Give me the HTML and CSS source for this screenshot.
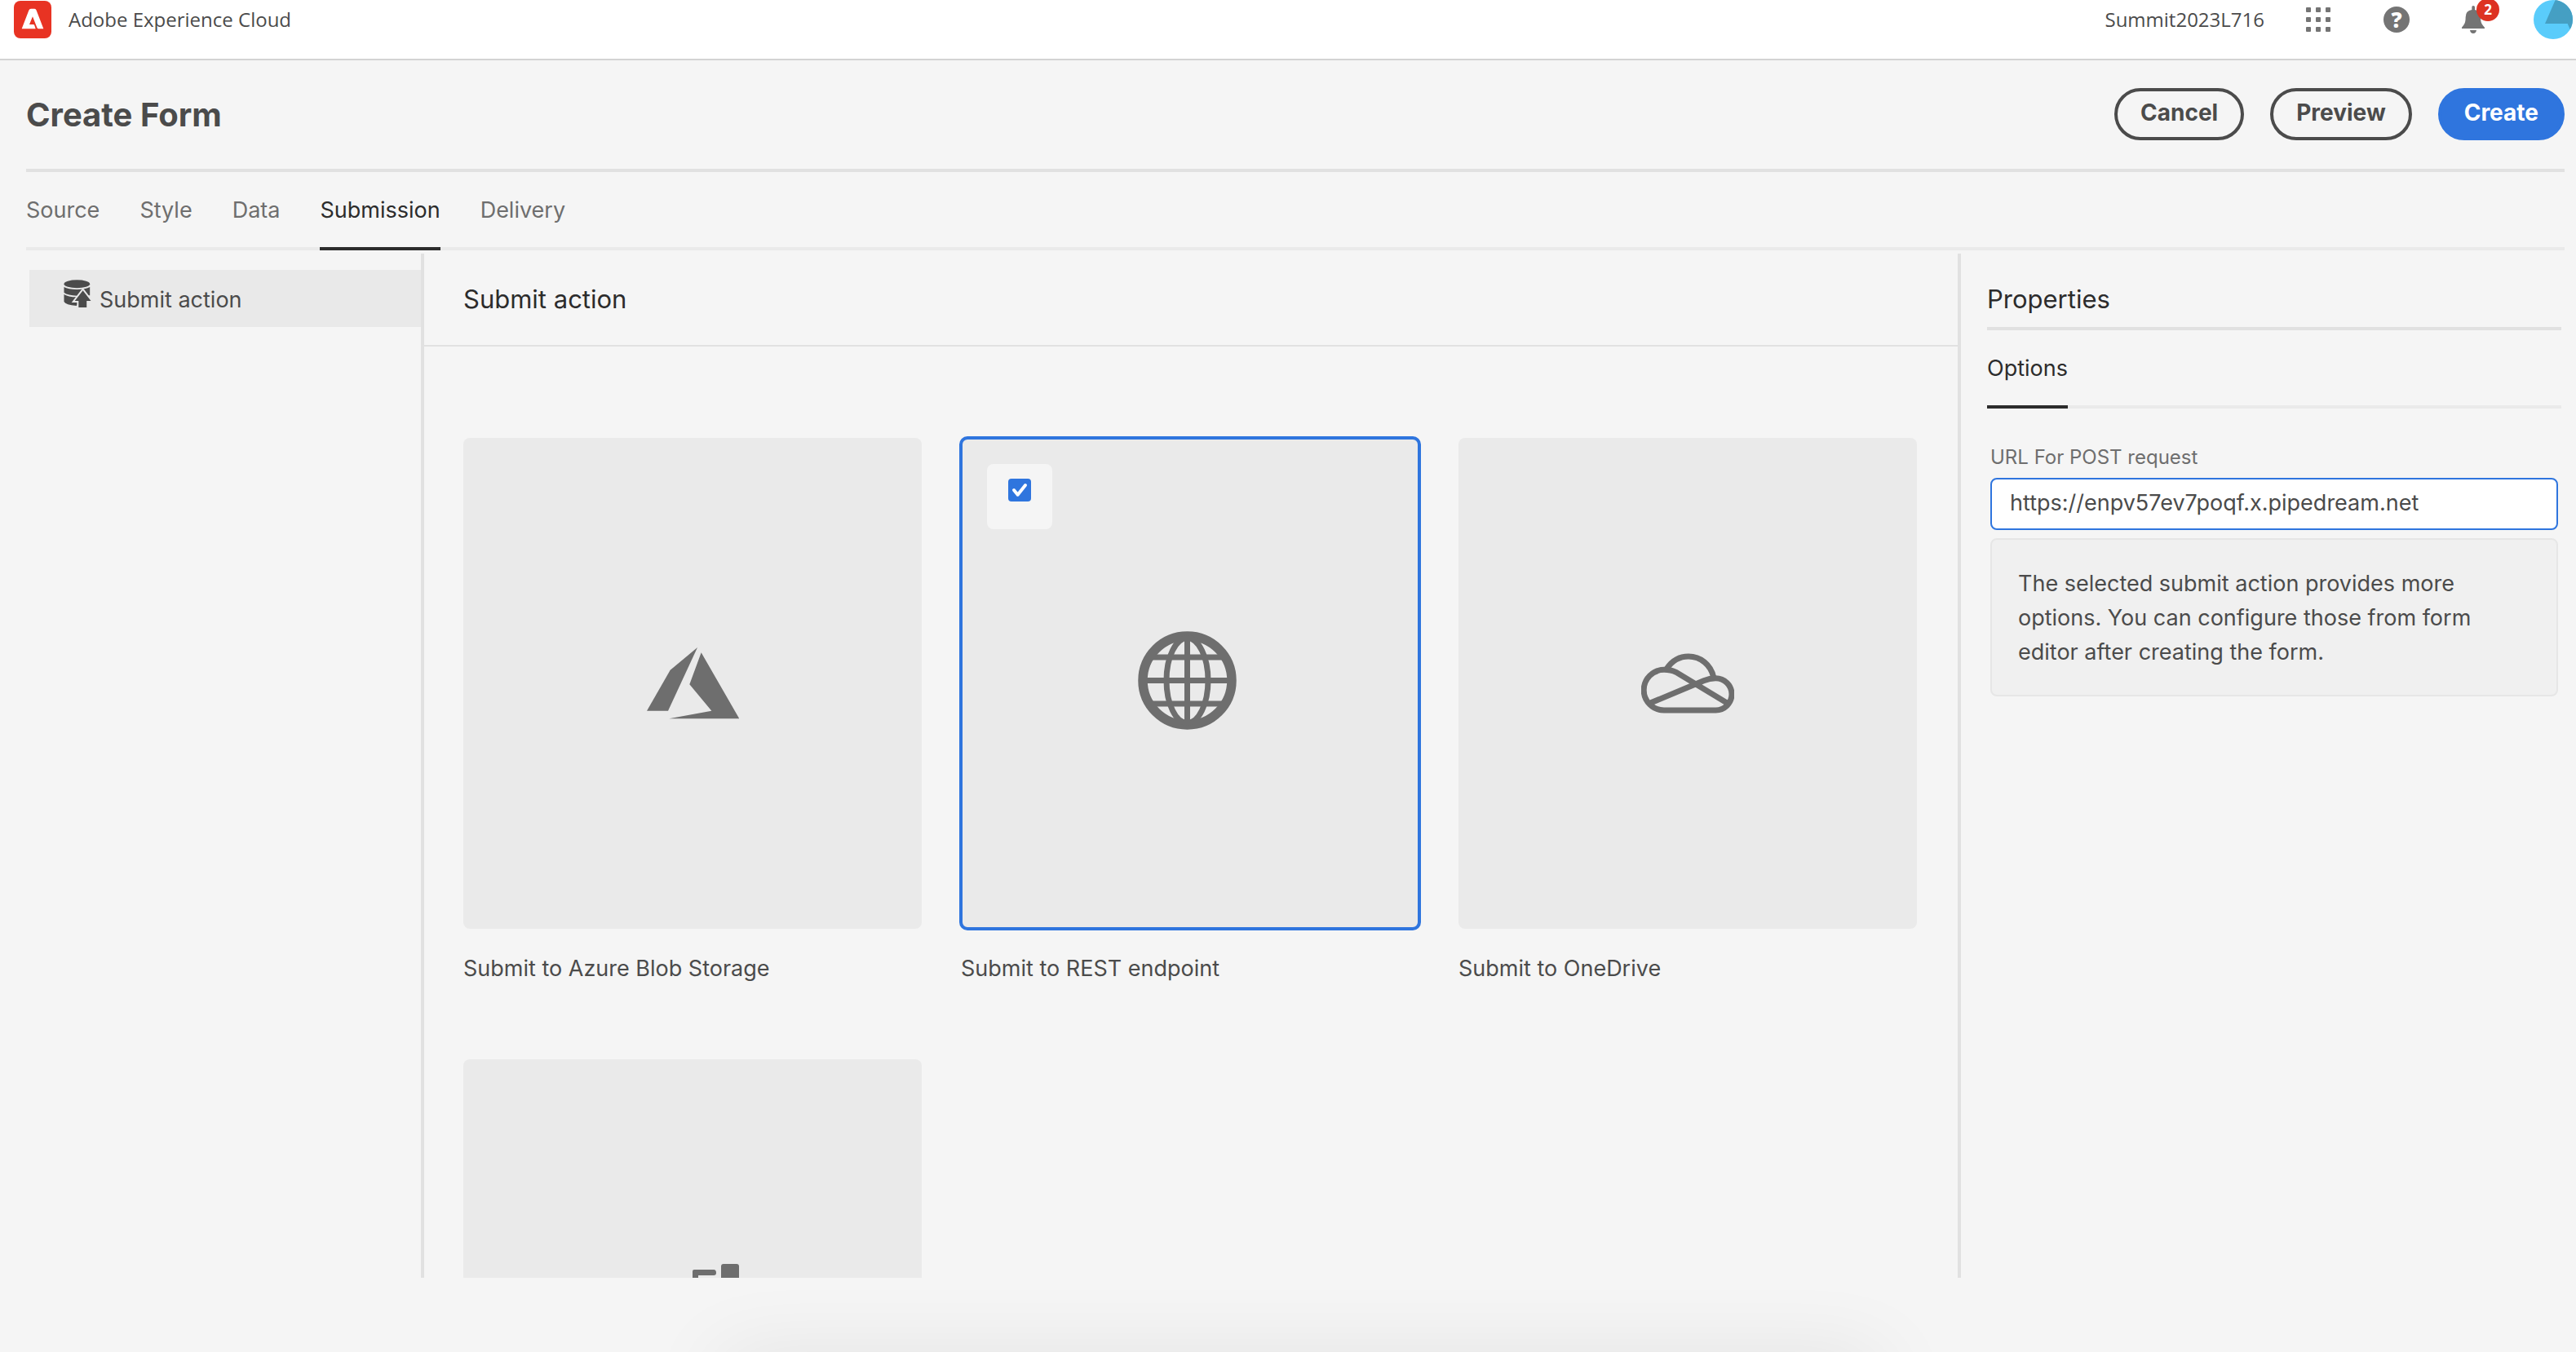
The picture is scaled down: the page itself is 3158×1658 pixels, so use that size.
FILE: index.html
```html
<!DOCTYPE html>
<html lang="en">
<head>
<meta charset="utf-8">
<meta name="viewport" content="width=device-width, initial-scale=1">
<title>Create Form - Adobe Experience Cloud</title>
<link rel="stylesheet" href="styles.css">
</head>
<body>
<header class="shell">
  <a class="brand" href="#">
    <svg class="brand-logo" viewBox="0 0 138 138" aria-hidden="true">
      <rect width="138" height="138" rx="24" fill="#e83323"/>
      <path d="M29 103 55 35Q57 29 63 29H76Q81 29 83 35L109 103H91Q87 103 85 98L69 58 57 87H71Q75 87 76 91L80 103Z" fill="#fff"/>
    </svg>
    <span>Adobe Experience Cloud</span>
  </a>
  <div class="shell-end">
    <button class="org" type="button">Summit2023L716</button>
    <div class="shell-actions">
      <button class="shell-button" type="button" aria-label="Solutions">
        <svg width="30" height="30" viewBox="0 0 30 30" fill="#747474">
          <rect width="6" height="6" rx="1"/><rect x="12" width="6" height="6" rx="1"/><rect x="24" width="6" height="6" rx="1"/>
          <rect y="12" width="6" height="6" rx="1"/><rect x="12" y="12" width="6" height="6" rx="1"/><rect x="24" y="12" width="6" height="6" rx="1"/>
          <rect y="24" width="6" height="6" rx="1"/><rect x="12" y="24" width="6" height="6" rx="1"/><rect x="24" y="24" width="6" height="6" rx="1"/>
        </svg>
      </button>
      <button class="shell-button" type="button" aria-label="Help"><span class="help">?</span></button>
      <button class="shell-button" type="button" aria-label="Notifications">
        <svg width="32" height="36" viewBox="0 0 96 108" fill="#747474">
          <path d="M37 8Q37 3 42 3Q48 3 48 8V18Q69 21 69 45C69 66 74 71 84 83V87H0V83C10 71 14 66 14 45Q14 21 37 18Z"/>
          <path d="M30 93H54Q52 105 42 105Q32 105 30 93Z"/>
        </svg>
        <span class="badge">2</span>
      </button>
      <button class="shell-button" type="button" aria-label="Account">
        <svg width="48" height="48" viewBox="0 0 144 144">
          <circle cx="72" cy="72" r="72" fill="#5accfb"/>
          <path d="M80 0 42 87H125L134 108A72 72 0 0 0 80 0Z" fill="#459fc3"/>
        </svg>
      </button>
    </div>
  </div>
</header>

<main class="page">
  <div class="titlebar">
    <h1 class="title">Create Form</h1>
    <div class="actions">
      <button class="button" type="button">Cancel</button>
      <button class="button" type="button">Preview</button>
      <button class="button button-primary" type="button">Create</button>
    </div>
  </div>

  <nav class="tabs" aria-label="Steps">
    <a class="tab" href="#">Source</a>
    <a class="tab" href="#">Style</a>
    <a class="tab" href="#">Data</a>
    <a class="tab tab-active" href="#" aria-current="page">Submission</a>
    <a class="tab" href="#">Delivery</a>
  </nav>

  <div class="workspace">
    <aside class="side">
      <a class="side-item" href="#">
        <svg width="34" height="34" viewBox="53 68 102 103" aria-hidden="true">
          <ellipse cx="102" cy="84" rx="48" ry="15" fill="#4b4b4b"/>
          <path d="M54 95Q70 104 102 104Q134 104 150 95V126H134L100 165Q60 162 54 150Z" fill="#4b4b4b"/>
          <path d="M52 118Q68 130 102 130" fill="none" stroke="#e9e9e9" stroke-width="5"/>
          <path d="M124 108 154 147H138V180H108V147H94Z" fill="#4b4b4b" stroke="#e9e9e9" stroke-width="12"/>
          <path d="M124 108 154 147H138V171H108V147H94Z" fill="#4b4b4b"/>
        </svg>
        <span>Submit action</span>
      </a>
    </aside>

    <section class="center">
      <header class="center-head"><h2 class="heading">Submit action</h2></header>
      <div class="cards">
        <article class="card">
          <div class="thumb">
            <svg width="113" height="88" viewBox="0 0 339 264" fill="#6e6e6e" aria-hidden="true">
              <path d="M186 0 86 83 0 233H78Z"/>
              <path d="M200 19 340 262H82L238 233 157 136Z"/>
            </svg>
          </div>
          <h3 class="card-name">Submit to Azure Blob Storage</h3>
        </article>
        <article class="card">
          <div class="thumb thumb-selected">
            <label class="check"><input class="check-box" type="checkbox" checked aria-label="Submit to REST endpoint"></label>
            <svg width="128" height="128" viewBox="0 0 256 256" fill="none" stroke="#6e6e6e" stroke-width="14" aria-hidden="true">
              <circle cx="121" cy="121" r="109" stroke-width="23"/>
              <ellipse cx="121" cy="121" rx="51" ry="104"/>
              <path d="M121 12V230M12 121H230M30 64H212M30 178H212"/>
            </svg>
          </div>
          <h3 class="card-name">Submit to REST endpoint</h3>
        </article>
        <article class="card">
          <div class="thumb">
            <svg width="114" height="74" viewBox="96 91 342 220" fill="none" stroke="#6e6e6e" stroke-width="21" aria-hidden="true">
              <path d="M190 147C210 117 240 102 270 102C314 102 352 132 362 178"/>
              <path d="M410 272 224 160C210 153 196 151 180 151A74 74 0 0 0 180 300H370A59 59 0 0 0 370 182C352 182 338 186 326 191L128 274"/>
            </svg>
          </div>
          <h3 class="card-name">Submit to OneDrive</h3>
        </article>
        <article class="card">
          <div class="thumb">
            <svg width="114" height="100" viewBox="0 0 114 100" fill="#6e6e6e" aria-hidden="true">
              <rect x="92" y="0" width="22" height="22" rx="3"/>
              <path d="M57 9Q57 7 59 7H83Q86 7 86 11Q86 14 83 14H64V86H83Q86 86 86 90Q86 93 83 93H57V54H30V47H57Z"/>
              <rect x="0" y="34" width="34" height="34" rx="3"/>
              <rect x="92" y="78" width="22" height="22" rx="3"/>
            </svg>
          </div>
        </article>
      </div>
    </section>

    <aside class="props">
      <h2 class="heading props-head">Properties</h2>
      <nav class="tabs" aria-label="Properties"><a class="tab tab-active" href="#">Options</a></nav>
      <div class="fields">
        <label class="field-label" for="post-url">URL For POST request</label>
        <input class="field-input" id="post-url" type="text" value="https://enpv57ev7poqf.x.pipedream.net">
        <p class="note">The selected submit action provides more options. You can configure those from form editor after creating the form.</p>
      </div>
    </aside>
  </div>
</main>
</body>
</html>
```
FILE: styles.css
```css
* { box-sizing: border-box; }

body {
  margin: 0;
  height: 100vh;
  display: flex;
  flex-direction: column;
  overflow: hidden;
  background: #f5f5f5;
  color: #4b4b4b;
  font: 27px/40px Inter, "Liberation Sans", sans-serif;
}

h1, h2, h3, p { margin: 0; font-size: inherit; font-weight: 400; }
a { color: inherit; text-decoration: none; }
button { padding: 0; border: 0; background: none; color: inherit; font: inherit; cursor: pointer; }
svg { display: block; flex: none; }

/* Product header */
.shell {
  display: flex;
  justify-content: space-between;
  flex: none;
  padding: 0 4px 24px 17px;
  border-bottom: 2px solid #d3d3d3;
  background: #fff;
  font: 24px/48px "Open Sans", "Noto Sans", sans-serif;
}
.brand { display: flex; align-items: center; gap: 21px; }
.brand-logo { width: 46px; height: 46px; }
.shell-end { display: flex; gap: 42px; }
.shell-actions { display: flex; gap: 48px; }
.shell-button {
  position: relative;
  display: flex;
  align-items: center;
  justify-content: center;
  width: 48px;
  height: 48px;
}
.help {
  width: 32px;
  height: 32px;
  border-radius: 50%;
  background: #747474;
  color: #fff;
  font-size: 26px;
  font-weight: 800;
  line-height: 32px;
}
.badge {
  position: absolute;
  top: -2px;
  right: -6px;
  width: 28px;
  height: 28px;
  border-radius: 50%;
  background: #dd3222;
  color: #fff;
  font-size: 17px;
  font-weight: 700;
  line-height: 28px;
}

/* Page title and actions */
.page {
  display: flex;
  flex: 1;
  flex-direction: column;
  min-height: 0;
  padding: 0 14px 91px 32px;
}
.titlebar {
  display: flex;
  align-items: center;
  justify-content: space-between;
  padding: 34px 0 35px;
  border-bottom: 4px solid #e1e1e1;
}
.title { padding-top: 2px; font-size: 40px; font-weight: 700; line-height: 48px; }
.actions { display: flex; gap: 32px; }
.button {
  height: 64px;
  padding: 0 28px 4px;
  border: 4px solid #4b4b4b;
  border-radius: 32px;
  font-size: 28px;
  font-weight: 700;
}
.button-primary { border-color: #2f75de; background: #2f75de; color: #fff; }

/* Tabs */
.tabs { display: flex; gap: 49px; box-shadow: inset 0 -4px #eaeaea; }
.tab {
  padding: 27px 0 25px;
  border-bottom: 4px solid transparent;
  color: #6e6e6e;
}
.tab-active { border-color: #2c2c2c; color: #2c2c2c; }

/* Three panes */
.workspace {
  display: grid;
  grid-template-columns: 488px minmax(0, 1fr) 744px;
  flex: 1;
  min-height: 0;
  padding-top: 4px;
}
.heading { color: #2c2c2c; font-size: 31px; line-height: 44px; }

.side { padding: 20px 0 0 4px; border-right: 4px solid #e1e1e1; }
.side-item {
  display: flex;
  align-items: baseline;
  gap: 10px;
  min-height: 70px;
  padding: 12px 42px 0;
  background: #e9e9e9;
}

.center { display: flex; flex-direction: column; min-height: 0; }
.center-head { padding: 34px 48px; border-bottom: 2px solid #e1e1e1; }
.cards {
  display: grid;
  grid-template-columns: repeat(3, minmax(0, 1fr));
  align-content: start;
  flex: 1;
  gap: 91px 48px;
  min-height: 0;
  padding: 112px 50px 0 48px;
  overflow: hidden;
}
.card { display: flex; flex-direction: column; gap: 29px; }
.thumb {
  position: relative;
  display: flex;
  align-items: center;
  justify-content: center;
  height: 602px;
  border-radius: 8px;
  background: #eaeaea;
}
.thumb-selected { outline: 4px solid #2f75de; outline-offset: -2px; }
.check {
  position: absolute;
  top: 32px;
  left: 32px;
  display: flex;
  justify-content: center;
  width: 80px;
  height: 80px;
  padding-top: 18px;
  border-radius: 8px;
  background: #f5f5f5;
}
.check-box {
  appearance: none;
  width: 28px;
  height: 28px;
  margin: 0;
  border-radius: 4px;
  background: #2f75de url("data:image/svg+xml,%3Csvg xmlns='http://www.w3.org/2000/svg' viewBox='0 0 84 84'%3E%3Cpath d='M21 42l14 17 28-35' fill='none' stroke='%23fff' stroke-width='12' stroke-linecap='round' stroke-linejoin='round'/%3E%3C/svg%3E");
}

/* Properties */
.props { padding: 0 4px 0 32px; border-left: 4px solid #e1e1e1; }
.props-head { padding: 34px 0 12px; border-bottom: 4px solid #e1e1e1; font-size: 31px; }
.fields { display: flex; flex-direction: column; padding: 43px 4px 0; }
.field-label { color: #6e6e6e; font-size: 24px; line-height: 34px; }
.field-input {
  width: 100%;
  height: 64px;
  margin: 8px 0 10px;
  padding: 0 22px 4px;
  border: 2px solid #2f75de;
  border-radius: 8px;
  outline: 0;
  background: #fff;
  color: #4b4b4b;
  font: inherit;
}
.note {
  padding: 33px 32px 31px;
  border: 2px solid #e6e6e6;
  border-radius: 8px;
  background: #f0f0f0;
  line-height: 42px;
}

/* Soft shade rising from the bottom edge of the window */
body::after {
  content: "";
  position: fixed;
  top: 100%;
  right: 27%;
  left: 28%;
  height: 60px;
  box-shadow: 0 10px 100px rgba(0, 0, 0, .1);
  pointer-events: none;
}
```
